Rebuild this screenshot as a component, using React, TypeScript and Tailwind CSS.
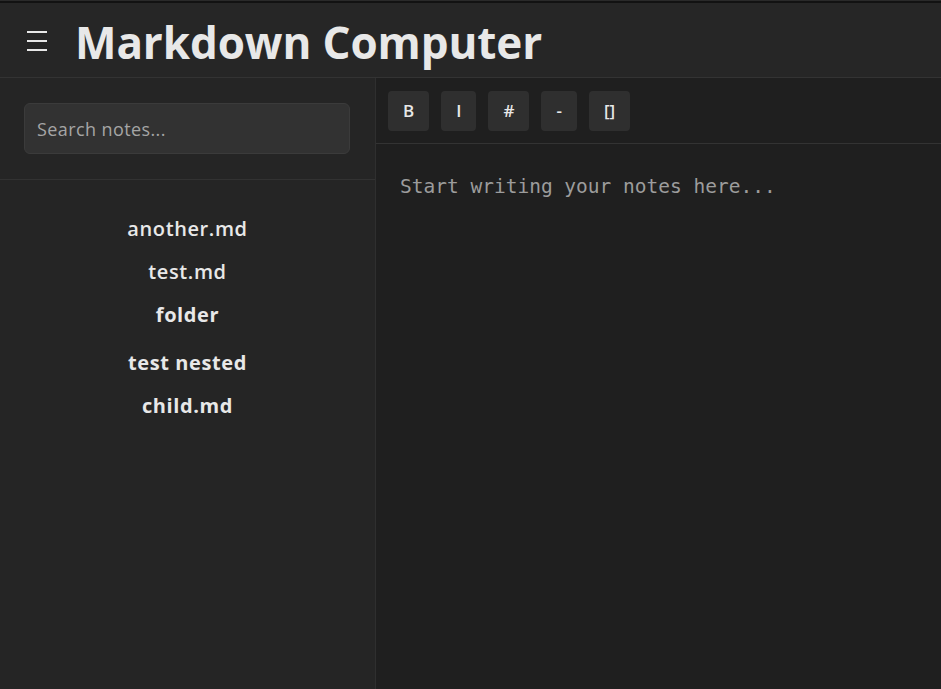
import { useState } from "react";

type FileNode = {
  name: string;
  kind: "file" | "folder";
};

const tree: FileNode[] = [
  { name: "another.md", kind: "file" },
  { name: "test.md", kind: "file" },
  { name: "folder", kind: "folder" },
  { name: "test nested", kind: "folder" },
  { name: "child.md", kind: "folder" },
];

const tools = ["B", "I", "#", "-", "[]"];

export default function App() {
  const [text, setText] = useState("");
  const [query, setQuery] = useState("");

  return (
    <div
      className="h-[689px] w-full flex flex-col bg-[#1f1f1f] text-[#e8e8e8] overflow-hidden"
      style={{ fontFamily: '"Open Sans", "Noto Sans", sans-serif' }}
    >
      {/* window strip */}
      <div className="h-[3px] bg-[#121212] border-t border-[#2a2a2a]" />

      {/* Header */}
      <header className="h-[75px] flex items-center gap-[28px] px-[27px] bg-[#262626] border-b border-[#333333]">
        <svg width="20" height="20" viewBox="0 0 20 20" className="text-[#e8e8e8] mt-[2px]">
          <rect x="0" y="0" width="20" height="2" fill="currentColor" />
          <rect x="0" y="9" width="20" height="2" fill="currentColor" />
          <rect x="0" y="18" width="20" height="2" fill="currentColor" />
        </svg>
        <h1 className="text-[44px] font-bold tracking-[-0.1px] leading-none mt-[3px]">Markdown Computer</h1>
      </header>

      <div className="flex flex-1 min-h-0">
        {/* Sidebar */}
        <aside className="w-[376px] flex flex-col bg-[#252525] border-r border-[#2f2f2f]">
          <div className="px-6 py-[25px] border-b border-[#323232]">
            <input
              value={query}
              onChange={(e) => setQuery(e.target.value)}
              placeholder="Search notes..."
              className="w-[326px] h-[51px] px-3 rounded-md bg-[#323232] border border-[#3b3b3b] text-[18px] tracking-[0.4px] text-[#e8e8e8] placeholder:text-[#a5a5a5] outline-none"
            />
          </div>
          <ul className="flex flex-col items-center pt-[35px] text-[20px] tracking-[0.6px]">
            {tree.map((node, i) => (
              <li
                key={node.name}
                className={`leading-[28px] ${node.kind === "folder" ? "font-bold" : "font-semibold"} ${
                  i === 0 ? "" : i === 3 ? "mt-[20px]" : "mt-[15px]"
                }`}
              >
                {node.name}
              </li>
            ))}
          </ul>
        </aside>

        {/* Editor */}
        <main className="flex-1 flex flex-col">
          <div className="h-[66px] flex items-center gap-3 px-3 border-b border-[#333333]">
            {tools.map((t) => (
              <button
                key={t}
                className="h-10 px-[15px] rounded bg-[#2f2f2f] text-[17px] text-[#e8e8e8] font-semibold"
              >
                {t}
              </button>
            ))}
          </div>
          <textarea
            value={text}
            onChange={(e) => setText(e.target.value)}
            placeholder="Start writing your notes here..."
            className="flex-1 resize-none bg-transparent px-6 pt-[29px] text-[19.5px] leading-[28px] text-[#e8e8e8] placeholder:text-[#9c9c9c] outline-none"
            style={{ fontFamily: '"DejaVu Sans Mono", monospace' }}
          />
        </main>
      </div>
    </div>
  );
}
